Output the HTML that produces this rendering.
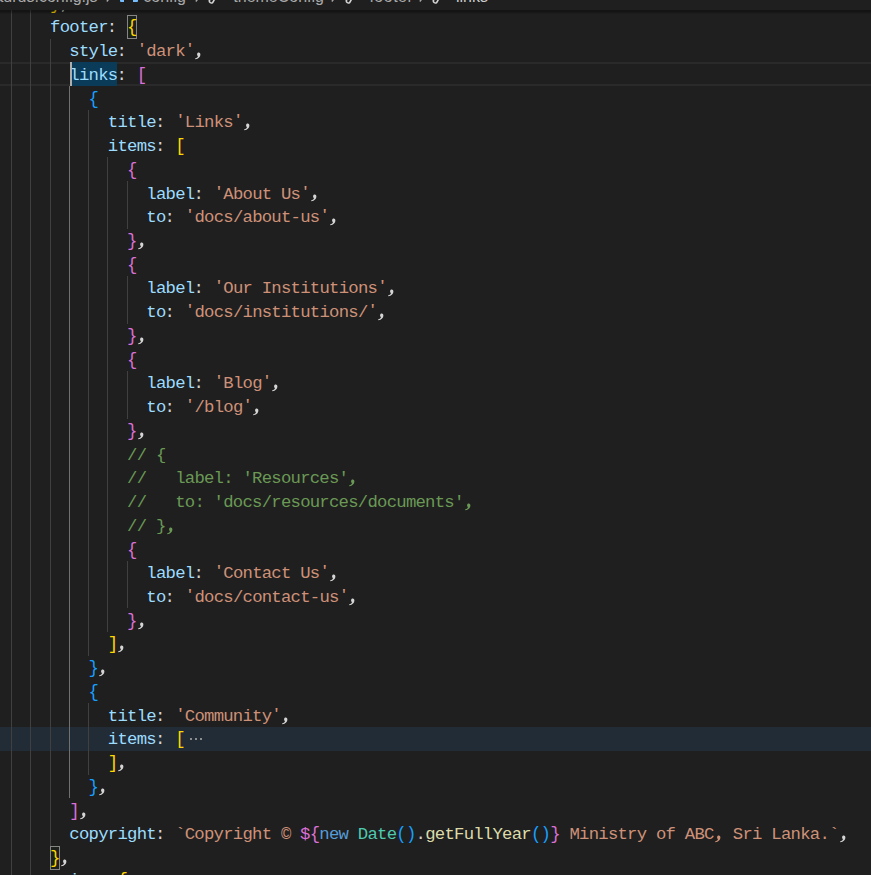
<!DOCTYPE html>
<html><head><meta charset="utf-8"><style>
html,body{margin:0;padding:0;}
body{width:871px;height:875px;overflow:hidden;background:#1f1f1f;position:relative;}
.l{position:absolute;left:0;height:23.73px;line-height:23.73px;font-family:"Liberation Mono",monospace;font-size:17.30px;white-space:pre;letter-spacing:-0.7566px;}
.l span{position:relative;}
.br{display:inline-block;transform:scaleY(1.07);transform-origin:50% 47%}
.cm{position:absolute;}
.cl{position:relative;left:-1px}
.q{display:inline-block;transform:translateY(-0.3px) scaleY(0.78);transform-origin:50% 0}
.gd{position:absolute;width:1px;background:#404040;}
.ga{position:absolute;width:1px;background:#707070;}
.p{color:#9CDCFE}
.u{color:#D4D4D4}
.s{color:#CE9178}
.c{color:#6A9955}
.g{color:#FFD700}
.o{color:#DA70D6}
.b{color:#179FFF}
.k{color:#569CD6}
.t{color:#4EC9B0}
.f{color:#DCDCAA}
.m{color:#DA70D6}
.e{color:#8C8C8C}
#bc{position:absolute;left:0;top:0;width:871px;height:10px;background:#1f1f1f;overflow:hidden;font-family:"Liberation Sans",sans-serif;font-size:16px;color:#a9a9a9;z-index:5}
#sh{position:absolute;left:0;top:10px;width:871px;height:4px;background:linear-gradient(rgba(0,0,0,0.39) 0px,rgba(0,0,0,0.36) 1px,rgba(0,0,0,0.36) 1.5px,rgba(0,0,0,0.1) 3.5px,rgba(0,0,0,0) 4px);z-index:4}
.bi{position:absolute;top:-11px;line-height:16px;white-space:pre}
</style></head><body>

<div style="position:absolute;left:0;top:62px;width:871px;height:24px;box-sizing:border-box;border-top:2px solid #2a2a2a;border-bottom:2px solid #2a2a2a"></div>
<div style="position:absolute;left:0;top:727px;width:871px;height:24px;background:#222c37"></div>
<div style="position:absolute;left:70.5px;top:62px;width:46.7px;height:24px;background:#0a3b59"></div>
<div class="gd" style="left:11px;top:-9px;height:902px"></div>
<div class="gd" style="left:30px;top:-9px;height:902px"></div>
<div class="gd" style="left:50px;top:39px;height:807px"></div>
<div class="ga" style="left:69px;top:86px;height:712px"></div>
<div class="gd" style="left:88px;top:110px;height:546px"></div>
<div class="gd" style="left:88px;top:703px;height:72px"></div>
<div class="gd" style="left:107px;top:157px;height:475px"></div>
<div class="gd" style="left:127px;top:181px;height:48px"></div>
<div class="gd" style="left:127px;top:276px;height:48px"></div>
<div class="gd" style="left:127px;top:371px;height:48px"></div>
<div class="gd" style="left:127px;top:561px;height:47px"></div>
<div style="position:absolute;left:127px;top:15px;width:10px;height:24px;box-sizing:border-box;border:1px solid #858585;background:rgba(0,60,0,0.08)"></div>
<div style="position:absolute;left:50px;top:846px;width:10px;height:24px;box-sizing:border-box;border:1px solid #858585;background:rgba(0,60,0,0.08)"></div>
<div class="l" style="left:50.10px;top:-7.36px"><span class="g"><span class="br">}</span></span><span class="u">,</span></div>
<div class="l" style="left:50.10px;top:16.37px"><span class="p">footer</span><span class="u"><span class="cl">:</span> </span><span class="g"><span class="br">{</span></span></div>
<svg class="cm" style="left:194.47px;top:51px" width="10" height="10" viewBox="0 -5 10 10"><path fill="#D4D4D4" d="M3.1,-1.8 C3.1,-2.9 3.8,-3.5 4.7,-3.5 C5.7,-3.5 6.4,-2.7 6.4,-1.5 C6.4,0.9 4.6,2.7 1.3,3.3 L1.0,2.4 C2.9,1.9 3.8,1.0 4.0,0.0 C3.4,-0.2 3.1,-0.9 3.1,-1.8 Z"/></svg>
<div class="l" style="left:69.35px;top:40.10px"><span class="p">style</span><span class="u"><span class="cl">:</span> </span><span class="s"><span class="q">&#39;</span>dark<span class="q">&#39;</span></span><span class="u"> </span></div>
<div class="l" style="left:69.35px;top:63.84px"><span class="p">links</span><span class="u"><span class="cl">:</span> </span><span class="o"><span class="br">[</span></span></div>
<div class="l" style="left:88.60px;top:87.58px"><span class="b"><span class="br">{</span></span></div>
<svg class="cm" style="left:242.60px;top:122px" width="10" height="10" viewBox="0 -5 10 10"><path fill="#D4D4D4" d="M3.1,-1.8 C3.1,-2.9 3.8,-3.5 4.7,-3.5 C5.7,-3.5 6.4,-2.7 6.4,-1.5 C6.4,0.9 4.6,2.7 1.3,3.3 L1.0,2.4 C2.9,1.9 3.8,1.0 4.0,0.0 C3.4,-0.2 3.1,-0.9 3.1,-1.8 Z"/></svg>
<div class="l" style="left:107.85px;top:111.31px"><span class="p">title</span><span class="u"><span class="cl">:</span> </span><span class="s"><span class="q">&#39;</span>Links<span class="q">&#39;</span></span><span class="u"> </span></div>
<div class="l" style="left:107.85px;top:135.05px"><span class="p">items</span><span class="u"><span class="cl">:</span> </span><span class="g"><span class="br">[</span></span></div>
<div class="l" style="left:127.10px;top:158.78px"><span class="o"><span class="br">{</span></span></div>
<svg class="cm" style="left:309.98px;top:193px" width="10" height="10" viewBox="0 -5 10 10"><path fill="#D4D4D4" d="M3.1,-1.8 C3.1,-2.9 3.8,-3.5 4.7,-3.5 C5.7,-3.5 6.4,-2.7 6.4,-1.5 C6.4,0.9 4.6,2.7 1.3,3.3 L1.0,2.4 C2.9,1.9 3.8,1.0 4.0,0.0 C3.4,-0.2 3.1,-0.9 3.1,-1.8 Z"/></svg>
<div class="l" style="left:146.35px;top:182.51px"><span class="p">label</span><span class="u"><span class="cl">:</span> </span><span class="s"><span class="q">&#39;</span>About Us<span class="q">&#39;</span></span><span class="u"> </span></div>
<svg class="cm" style="left:329.23px;top:217px" width="10" height="10" viewBox="0 -5 10 10"><path fill="#D4D4D4" d="M3.1,-1.8 C3.1,-2.9 3.8,-3.5 4.7,-3.5 C5.7,-3.5 6.4,-2.7 6.4,-1.5 C6.4,0.9 4.6,2.7 1.3,3.3 L1.0,2.4 C2.9,1.9 3.8,1.0 4.0,0.0 C3.4,-0.2 3.1,-0.9 3.1,-1.8 Z"/></svg>
<div class="l" style="left:146.35px;top:206.25px"><span class="p">to</span><span class="u"><span class="cl">:</span> </span><span class="s"><span class="q">&#39;</span>docs/about-us<span class="q">&#39;</span></span><span class="u"> </span></div>
<svg class="cm" style="left:136.72px;top:241px" width="10" height="10" viewBox="0 -5 10 10"><path fill="#D4D4D4" d="M3.1,-1.8 C3.1,-2.9 3.8,-3.5 4.7,-3.5 C5.7,-3.5 6.4,-2.7 6.4,-1.5 C6.4,0.9 4.6,2.7 1.3,3.3 L1.0,2.4 C2.9,1.9 3.8,1.0 4.0,0.0 C3.4,-0.2 3.1,-0.9 3.1,-1.8 Z"/></svg>
<div class="l" style="left:127.10px;top:229.99px"><span class="o"><span class="br">}</span></span><span class="u"> </span></div>
<div class="l" style="left:127.10px;top:253.72px"><span class="o"><span class="br">{</span></span></div>
<svg class="cm" style="left:386.98px;top:288px" width="10" height="10" viewBox="0 -5 10 10"><path fill="#D4D4D4" d="M3.1,-1.8 C3.1,-2.9 3.8,-3.5 4.7,-3.5 C5.7,-3.5 6.4,-2.7 6.4,-1.5 C6.4,0.9 4.6,2.7 1.3,3.3 L1.0,2.4 C2.9,1.9 3.8,1.0 4.0,0.0 C3.4,-0.2 3.1,-0.9 3.1,-1.8 Z"/></svg>
<div class="l" style="left:146.35px;top:277.45px"><span class="p">label</span><span class="u"><span class="cl">:</span> </span><span class="s"><span class="q">&#39;</span>Our Institutions<span class="q">&#39;</span></span><span class="u"> </span></div>
<svg class="cm" style="left:377.35px;top:312px" width="10" height="10" viewBox="0 -5 10 10"><path fill="#D4D4D4" d="M3.1,-1.8 C3.1,-2.9 3.8,-3.5 4.7,-3.5 C5.7,-3.5 6.4,-2.7 6.4,-1.5 C6.4,0.9 4.6,2.7 1.3,3.3 L1.0,2.4 C2.9,1.9 3.8,1.0 4.0,0.0 C3.4,-0.2 3.1,-0.9 3.1,-1.8 Z"/></svg>
<div class="l" style="left:146.35px;top:301.19px"><span class="p">to</span><span class="u"><span class="cl">:</span> </span><span class="s"><span class="q">&#39;</span>docs/institutions/<span class="q">&#39;</span></span><span class="u"> </span></div>
<svg class="cm" style="left:136.72px;top:336px" width="10" height="10" viewBox="0 -5 10 10"><path fill="#D4D4D4" d="M3.1,-1.8 C3.1,-2.9 3.8,-3.5 4.7,-3.5 C5.7,-3.5 6.4,-2.7 6.4,-1.5 C6.4,0.9 4.6,2.7 1.3,3.3 L1.0,2.4 C2.9,1.9 3.8,1.0 4.0,0.0 C3.4,-0.2 3.1,-0.9 3.1,-1.8 Z"/></svg>
<div class="l" style="left:127.10px;top:324.93px"><span class="o"><span class="br">}</span></span><span class="u"> </span></div>
<div class="l" style="left:127.10px;top:348.66px"><span class="o"><span class="br">{</span></span></div>
<svg class="cm" style="left:271.48px;top:383px" width="10" height="10" viewBox="0 -5 10 10"><path fill="#D4D4D4" d="M3.1,-1.8 C3.1,-2.9 3.8,-3.5 4.7,-3.5 C5.7,-3.5 6.4,-2.7 6.4,-1.5 C6.4,0.9 4.6,2.7 1.3,3.3 L1.0,2.4 C2.9,1.9 3.8,1.0 4.0,0.0 C3.4,-0.2 3.1,-0.9 3.1,-1.8 Z"/></svg>
<div class="l" style="left:146.35px;top:372.39px"><span class="p">label</span><span class="u"><span class="cl">:</span> </span><span class="s"><span class="q">&#39;</span>Blog<span class="q">&#39;</span></span><span class="u"> </span></div>
<svg class="cm" style="left:252.22px;top:407px" width="10" height="10" viewBox="0 -5 10 10"><path fill="#D4D4D4" d="M3.1,-1.8 C3.1,-2.9 3.8,-3.5 4.7,-3.5 C5.7,-3.5 6.4,-2.7 6.4,-1.5 C6.4,0.9 4.6,2.7 1.3,3.3 L1.0,2.4 C2.9,1.9 3.8,1.0 4.0,0.0 C3.4,-0.2 3.1,-0.9 3.1,-1.8 Z"/></svg>
<div class="l" style="left:146.35px;top:396.13px"><span class="p">to</span><span class="u"><span class="cl">:</span> </span><span class="s"><span class="q">&#39;</span>/blog<span class="q">&#39;</span></span><span class="u"> </span></div>
<svg class="cm" style="left:136.72px;top:431px" width="10" height="10" viewBox="0 -5 10 10"><path fill="#D4D4D4" d="M3.1,-1.8 C3.1,-2.9 3.8,-3.5 4.7,-3.5 C5.7,-3.5 6.4,-2.7 6.4,-1.5 C6.4,0.9 4.6,2.7 1.3,3.3 L1.0,2.4 C2.9,1.9 3.8,1.0 4.0,0.0 C3.4,-0.2 3.1,-0.9 3.1,-1.8 Z"/></svg>
<div class="l" style="left:127.10px;top:419.87px"><span class="o"><span class="br">}</span></span><span class="u"> </span></div>
<div class="l" style="left:127.10px;top:443.60px"><span class="c">// {</span></div>
<svg class="cm" style="left:348.48px;top:478px" width="10" height="10" viewBox="0 -5 10 10"><path fill="#6A9955" d="M3.1,-1.8 C3.1,-2.9 3.8,-3.5 4.7,-3.5 C5.7,-3.5 6.4,-2.7 6.4,-1.5 C6.4,0.9 4.6,2.7 1.3,3.3 L1.0,2.4 C2.9,1.9 3.8,1.0 4.0,0.0 C3.4,-0.2 3.1,-0.9 3.1,-1.8 Z"/></svg>
<div class="l" style="left:127.10px;top:467.33px"><span class="c">//   label: &#x27;Resources&#x27; </span></div>
<svg class="cm" style="left:463.98px;top:502px" width="10" height="10" viewBox="0 -5 10 10"><path fill="#6A9955" d="M3.1,-1.8 C3.1,-2.9 3.8,-3.5 4.7,-3.5 C5.7,-3.5 6.4,-2.7 6.4,-1.5 C6.4,0.9 4.6,2.7 1.3,3.3 L1.0,2.4 C2.9,1.9 3.8,1.0 4.0,0.0 C3.4,-0.2 3.1,-0.9 3.1,-1.8 Z"/></svg>
<div class="l" style="left:127.10px;top:491.07px"><span class="c">//   to: &#x27;docs/resources/documents&#x27; </span></div>
<svg class="cm" style="left:165.60px;top:526px" width="10" height="10" viewBox="0 -5 10 10"><path fill="#6A9955" d="M3.1,-1.8 C3.1,-2.9 3.8,-3.5 4.7,-3.5 C5.7,-3.5 6.4,-2.7 6.4,-1.5 C6.4,0.9 4.6,2.7 1.3,3.3 L1.0,2.4 C2.9,1.9 3.8,1.0 4.0,0.0 C3.4,-0.2 3.1,-0.9 3.1,-1.8 Z"/></svg>
<div class="l" style="left:127.10px;top:514.80px"><span class="c">// } </span></div>
<div class="l" style="left:127.10px;top:538.54px"><span class="o"><span class="br">{</span></span></div>
<svg class="cm" style="left:329.23px;top:573px" width="10" height="10" viewBox="0 -5 10 10"><path fill="#D4D4D4" d="M3.1,-1.8 C3.1,-2.9 3.8,-3.5 4.7,-3.5 C5.7,-3.5 6.4,-2.7 6.4,-1.5 C6.4,0.9 4.6,2.7 1.3,3.3 L1.0,2.4 C2.9,1.9 3.8,1.0 4.0,0.0 C3.4,-0.2 3.1,-0.9 3.1,-1.8 Z"/></svg>
<div class="l" style="left:146.35px;top:562.27px"><span class="p">label</span><span class="u"><span class="cl">:</span> </span><span class="s"><span class="q">&#39;</span>Contact Us<span class="q">&#39;</span></span><span class="u"> </span></div>
<svg class="cm" style="left:348.48px;top:597px" width="10" height="10" viewBox="0 -5 10 10"><path fill="#D4D4D4" d="M3.1,-1.8 C3.1,-2.9 3.8,-3.5 4.7,-3.5 C5.7,-3.5 6.4,-2.7 6.4,-1.5 C6.4,0.9 4.6,2.7 1.3,3.3 L1.0,2.4 C2.9,1.9 3.8,1.0 4.0,0.0 C3.4,-0.2 3.1,-0.9 3.1,-1.8 Z"/></svg>
<div class="l" style="left:146.35px;top:586.01px"><span class="p">to</span><span class="u"><span class="cl">:</span> </span><span class="s"><span class="q">&#39;</span>docs/contact-us<span class="q">&#39;</span></span><span class="u"> </span></div>
<svg class="cm" style="left:136.72px;top:621px" width="10" height="10" viewBox="0 -5 10 10"><path fill="#D4D4D4" d="M3.1,-1.8 C3.1,-2.9 3.8,-3.5 4.7,-3.5 C5.7,-3.5 6.4,-2.7 6.4,-1.5 C6.4,0.9 4.6,2.7 1.3,3.3 L1.0,2.4 C2.9,1.9 3.8,1.0 4.0,0.0 C3.4,-0.2 3.1,-0.9 3.1,-1.8 Z"/></svg>
<div class="l" style="left:127.10px;top:609.75px"><span class="o"><span class="br">}</span></span><span class="u"> </span></div>
<svg class="cm" style="left:117.47px;top:644px" width="10" height="10" viewBox="0 -5 10 10"><path fill="#D4D4D4" d="M3.1,-1.8 C3.1,-2.9 3.8,-3.5 4.7,-3.5 C5.7,-3.5 6.4,-2.7 6.4,-1.5 C6.4,0.9 4.6,2.7 1.3,3.3 L1.0,2.4 C2.9,1.9 3.8,1.0 4.0,0.0 C3.4,-0.2 3.1,-0.9 3.1,-1.8 Z"/></svg>
<div class="l" style="left:107.85px;top:633.48px"><span class="g"><span class="br">]</span></span><span class="u"> </span></div>
<svg class="cm" style="left:98.22px;top:668px" width="10" height="10" viewBox="0 -5 10 10"><path fill="#D4D4D4" d="M3.1,-1.8 C3.1,-2.9 3.8,-3.5 4.7,-3.5 C5.7,-3.5 6.4,-2.7 6.4,-1.5 C6.4,0.9 4.6,2.7 1.3,3.3 L1.0,2.4 C2.9,1.9 3.8,1.0 4.0,0.0 C3.4,-0.2 3.1,-0.9 3.1,-1.8 Z"/></svg>
<div class="l" style="left:88.60px;top:657.22px"><span class="b"><span class="br">}</span></span><span class="u"> </span></div>
<div class="l" style="left:88.60px;top:680.95px"><span class="b"><span class="br">{</span></span></div>
<svg class="cm" style="left:281.10px;top:716px" width="10" height="10" viewBox="0 -5 10 10"><path fill="#D4D4D4" d="M3.1,-1.8 C3.1,-2.9 3.8,-3.5 4.7,-3.5 C5.7,-3.5 6.4,-2.7 6.4,-1.5 C6.4,0.9 4.6,2.7 1.3,3.3 L1.0,2.4 C2.9,1.9 3.8,1.0 4.0,0.0 C3.4,-0.2 3.1,-0.9 3.1,-1.8 Z"/></svg>
<div class="l" style="left:107.85px;top:704.68px"><span class="p">title</span><span class="u"><span class="cl">:</span> </span><span class="s"><span class="q">&#39;</span>Community<span class="q">&#39;</span></span><span class="u"> </span></div>
<div class="l" style="left:107.85px;top:728.42px"><span class="p">items</span><span class="u"><span class="cl">:</span> </span><span class="g"><span class="br">[</span></span></div>
<svg class="cm" style="left:117.47px;top:763px" width="10" height="10" viewBox="0 -5 10 10"><path fill="#D4D4D4" d="M3.1,-1.8 C3.1,-2.9 3.8,-3.5 4.7,-3.5 C5.7,-3.5 6.4,-2.7 6.4,-1.5 C6.4,0.9 4.6,2.7 1.3,3.3 L1.0,2.4 C2.9,1.9 3.8,1.0 4.0,0.0 C3.4,-0.2 3.1,-0.9 3.1,-1.8 Z"/></svg>
<div class="l" style="left:107.85px;top:752.15px"><span class="g"><span class="br">]</span></span><span class="u"> </span></div>
<svg class="cm" style="left:98.22px;top:787px" width="10" height="10" viewBox="0 -5 10 10"><path fill="#D4D4D4" d="M3.1,-1.8 C3.1,-2.9 3.8,-3.5 4.7,-3.5 C5.7,-3.5 6.4,-2.7 6.4,-1.5 C6.4,0.9 4.6,2.7 1.3,3.3 L1.0,2.4 C2.9,1.9 3.8,1.0 4.0,0.0 C3.4,-0.2 3.1,-0.9 3.1,-1.8 Z"/></svg>
<div class="l" style="left:88.60px;top:775.89px"><span class="b"><span class="br">}</span></span><span class="u"> </span></div>
<svg class="cm" style="left:78.97px;top:811px" width="10" height="10" viewBox="0 -5 10 10"><path fill="#D4D4D4" d="M3.1,-1.8 C3.1,-2.9 3.8,-3.5 4.7,-3.5 C5.7,-3.5 6.4,-2.7 6.4,-1.5 C6.4,0.9 4.6,2.7 1.3,3.3 L1.0,2.4 C2.9,1.9 3.8,1.0 4.0,0.0 C3.4,-0.2 3.1,-0.9 3.1,-1.8 Z"/></svg>
<div class="l" style="left:69.35px;top:799.62px"><span class="o"><span class="br">]</span></span><span class="u"> </span></div>
<svg class="cm" style="left:714.23px;top:834px" width="10" height="10" viewBox="0 -5 10 10"><path fill="#CE9178" d="M3.1,-1.8 C3.1,-2.9 3.8,-3.5 4.7,-3.5 C5.7,-3.5 6.4,-2.7 6.4,-1.5 C6.4,0.9 4.6,2.7 1.3,3.3 L1.0,2.4 C2.9,1.9 3.8,1.0 4.0,0.0 C3.4,-0.2 3.1,-0.9 3.1,-1.8 Z"/></svg>
<svg class="cm" style="left:839.35px;top:834px" width="10" height="10" viewBox="0 -5 10 10"><path fill="#D4D4D4" d="M3.1,-1.8 C3.1,-2.9 3.8,-3.5 4.7,-3.5 C5.7,-3.5 6.4,-2.7 6.4,-1.5 C6.4,0.9 4.6,2.7 1.3,3.3 L1.0,2.4 C2.9,1.9 3.8,1.0 4.0,0.0 C3.4,-0.2 3.1,-0.9 3.1,-1.8 Z"/></svg>
<div class="l" style="left:69.35px;top:823.36px"><span class="p">copyright</span><span class="u"><span class="cl">:</span> </span><span class="s">`Copyright © </span><span class="m">$</span><span class="o"><span class="br">{</span></span><span class="k">new</span><span class="u"> </span><span class="t">Date</span><span class="b"><span class="br">(</span><span class="br">)</span></span><span class="u">.</span><span class="f">getFullYear</span><span class="b"><span class="br">(</span><span class="br">)</span></span><span class="o"><span class="br">}</span></span><span class="s"> Ministry of ABC  Sri Lanka.`</span><span class="u"> </span></div>
<svg class="cm" style="left:59.73px;top:858px" width="10" height="10" viewBox="0 -5 10 10"><path fill="#D4D4D4" d="M3.1,-1.8 C3.1,-2.9 3.8,-3.5 4.7,-3.5 C5.7,-3.5 6.4,-2.7 6.4,-1.5 C6.4,0.9 4.6,2.7 1.3,3.3 L1.0,2.4 C2.9,1.9 3.8,1.0 4.0,0.0 C3.4,-0.2 3.1,-0.9 3.1,-1.8 Z"/></svg>
<div class="l" style="left:50.10px;top:847.10px"><span class="g"><span class="br">}</span></span><span class="u"> </span></div>
<div class="l" style="left:50.10px;top:869.33px"><span class="p">prism</span><span class="u"><span class="cl">:</span> </span><span class="g"><span class="br">{</span></span></div>
<div style="position:absolute;left:70px;top:62px;width:2px;height:24px;background:#aeafad"></div>
<div style="position:absolute;left:189.6px;top:738px;width:2px;height:2px;background:#8e8e8e"></div>
<div style="position:absolute;left:194.7px;top:738px;width:2px;height:2px;background:#8e8e8e"></div>
<div style="position:absolute;left:199.9px;top:738px;width:2px;height:2px;background:#8e8e8e"></div>
<div id="sh"></div>
<div id="bc"><div class="bi" style="right:773.4px">docusaurus.config.js</div><svg style="position:absolute;left:105.5px;top:-8.7px" width="6" height="11" viewBox="0 0 6 11"><path d="M0.8 0.5 L4.8 5.5 L0.8 10.5" stroke="#a9a9a9" stroke-width="1.4" fill="none"/></svg><div style="position:absolute;left:119.5px;top:-2px;width:4.6px;height:4.3px;background:#75beff;border-radius:0 0 0 1px"></div><div style="position:absolute;left:133.3px;top:-2px;width:4.6px;height:4.3px;background:#75beff;border-radius:0 0 1px 0"></div><div class="bi" style="left:143.3px">config</div><svg style="position:absolute;left:194.6px;top:-8.7px" width="6" height="11" viewBox="0 0 6 11"><path d="M0.8 0.5 L4.8 5.5 L0.8 10.5" stroke="#a9a9a9" stroke-width="1.4" fill="none"/></svg><svg style="position:absolute;left:208.3px;top:-7px" width="12" height="13" viewBox="0 0 12 13"><path d="M10.2 0 L4.6 9.6 A2.1 2.1 0 0 1 1.3 7.6 L6.6 0" stroke="#d4d4d4" stroke-width="1.6" fill="none"/></svg><div class="bi" style="left:233.3px">themeConfig</div><svg style="position:absolute;left:330.7px;top:-8.7px" width="6" height="11" viewBox="0 0 6 11"><path d="M0.8 0.5 L4.8 5.5 L0.8 10.5" stroke="#a9a9a9" stroke-width="1.4" fill="none"/></svg><svg style="position:absolute;left:344.5px;top:-7px" width="12" height="13" viewBox="0 0 12 13"><path d="M10.2 0 L4.6 9.6 A2.1 2.1 0 0 1 1.3 7.6 L6.6 0" stroke="#d4d4d4" stroke-width="1.6" fill="none"/></svg><div class="bi" style="left:369.4px;letter-spacing:0.5px">footer</div><svg style="position:absolute;left:418.8px;top:-8.7px" width="6" height="11" viewBox="0 0 6 11"><path d="M0.8 0.5 L4.8 5.5 L0.8 10.5" stroke="#a9a9a9" stroke-width="1.4" fill="none"/></svg><svg style="position:absolute;left:431.8px;top:-7px" width="12" height="13" viewBox="0 0 12 13"><path d="M10.2 0 L4.6 9.6 A2.1 2.1 0 0 1 1.3 7.6 L6.6 0" stroke="#d4d4d4" stroke-width="1.6" fill="none"/></svg><div class="bi" style="left:456px;color:#cccccc">links</div></div>
</body></html>
